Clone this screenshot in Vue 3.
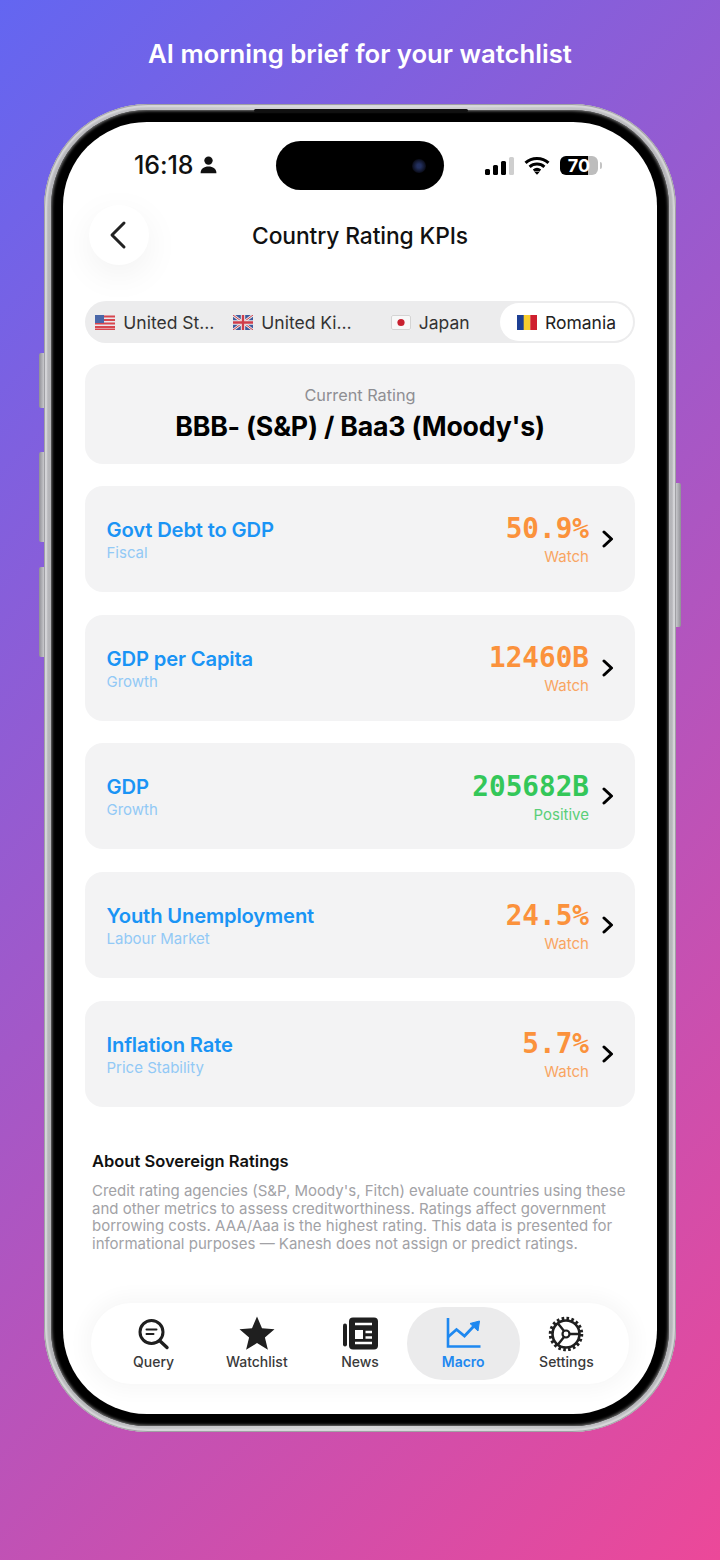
<script setup>
const tabs = [
  { name: 'United St…', flag: 'us' },
  { name: 'United Ki…', flag: 'uk' },
  { name: 'Japan', flag: 'jp' },
  { name: 'Romania', flag: 'ro', active: true },
]
const kpis = [
  { title: 'Govt Debt to GDP', sub: 'Fiscal', value: '50.9%', status: 'Watch', tone: 'watch' },
  { title: 'GDP per Capita', sub: 'Growth', value: '12460B', status: 'Watch', tone: 'watch' },
  { title: 'GDP', sub: 'Growth', value: '205682B', status: 'Positive', tone: 'good' },
  { title: 'Youth Unemployment', sub: 'Labour Market', value: '24.5%', status: 'Watch', tone: 'watch' },
  { title: 'Inflation Rate', sub: 'Price Stability', value: '5.7%', status: 'Watch', tone: 'watch' },
]
const nav = [
  { name: 'Query', icon: 'query' },
  { name: 'Watchlist', icon: 'star' },
  { name: 'News', icon: 'news' },
  { name: 'Macro', icon: 'macro', active: true },
  { name: 'Settings', icon: 'gear' },
]
</script>

<template>
  <div class="page">
    <h1 class="headline">AI morning brief for your watchlist</h1>
    <div class="phone">
      <i class="btn b1"></i><i class="btn b2"></i><i class="btn b3"></i><i class="btn b4"></i>
      <div class="bezel">
        <i class="lip"></i>
        <div class="screen">
          <div class="status">
            <div class="status-left">
              <span class="time">16:18</span>
              <svg width="17" height="18" viewBox="0 0 17 18"><circle cx="8.5" cy="4.6" r="4.2" fill="#111"/><path d="M.6 17.2c0-4.4 3.4-6.6 7.9-6.6s7.9 2.2 7.9 6.6z" fill="#111"/></svg>
            </div>
            <div class="island"><i class="lens"></i></div>
            <div class="status-right">
              <div class="signal"><i class="s1"></i><i class="s2"></i><i class="s3"></i><i class="s4"></i></div>
              <svg class="wifi" width="26" height="19" viewBox="0 0 26 19"><path d="M1.5 6.8C7.8.9 18.200.9 24.500 6.800M5.600 10.800c4.200-3.700 10.600-3.700 14.800 0M9.700 14.600c2-1.500 4.600-1.500 6.600 0" fill="none" stroke="#000" stroke-width="3"/><path d="M10.600 16.200 13 18.800l2.400-2.600c-1.400-1-3.400-1-4.800 0z" fill="#000"/></svg>
              <div class="battery"><span>70</span></div>
              <i class="tip"></i>
            </div>
          </div>

          <div class="header">
            <button class="back" aria-label="Back">
              <svg width="22" height="30" viewBox="0 0 22 30"><path d="M17 3 5 15l12 12" fill="none" stroke="#222" stroke-width="3" stroke-linecap="round" stroke-linejoin="round"/></svg>
            </button>
            <h2 class="title">Country Rating KPIs</h2>
          </div>

          <div class="content">
            <div class="tabs">
              <div v-for="t in tabs" :key="t.flag" class="tab" :class="{ active: t.active }">
                <svg class="flag" width="20" height="15" viewBox="0 0 20 15">
                  <template v-if="t.flag === 'us'">
                    <rect width="20" height="15" rx="1.500" fill="#e8e8ee"/>
                    <path d="M0 1.500h20M0 5h20M0 8.500h20M0 12h20M0 14.500h20" stroke="#d8464e" stroke-width="1.800"/>
                    <rect width="9" height="8" fill="#4a67a8"/>
                  </template>
                  <template v-else-if="t.flag === 'uk'">
                    <rect width="20" height="15" rx="1.500" fill="#3e5a9c"/>
                    <path d="M0 0l20 15M20 0 0 15" stroke="#eee" stroke-width="2.600"/>
                    <path d="M0 0l20 15M20 0 0 15" stroke="#cf3d4a" stroke-width="1"/>
                    <path d="M10 0v15M0 7.500h20" stroke="#eee" stroke-width="4.400"/>
                    <path d="M10 0v15M0 7.500h20" stroke="#cf3d4a" stroke-width="2.400"/>
                  </template>
                  <template v-else-if="t.flag === 'jp'">
                    <rect width="20" height="15" rx="1.500" fill="#f8f8f8"/>
                    <rect x=".5" y=".5" width="19" height="14" rx="1.500" fill="none" stroke="#d4d4d4"/>
                    <circle cx="10" cy="7.500" r="3.600" fill="#c8202f"/>
                  </template>
                  <template v-else>
                    <rect width="7" height="15" fill="#1d3f94"/>
                    <rect x="6.700" width="6.700" height="15" fill="#f7cd2e"/>
                    <rect x="13.300" width="6.700" height="15" fill="#cf1f2f"/>
                  </template>
                </svg>
                <span>{{ t.name }}</span>
              </div>
            </div>

            <div class="rating">
              <div class="rating-label">Current Rating</div>
              <div class="rating-value">BBB- (S&amp;P) / Baa3 (Moody's)</div>
            </div>

            <div class="kpis">
              <div v-for="k in kpis" :key="k.title" class="kpi">
                <div class="kpi-left">
                  <div class="kpi-title">{{ k.title }}</div>
                  <div class="kpi-sub">{{ k.sub }}</div>
                </div>
                <div class="kpi-right" :class="k.tone">
                  <div class="kpi-value">{{ k.value }}</div>
                  <div class="kpi-status">{{ k.status }}</div>
                </div>
                <svg class="chev" width="14" height="18" viewBox="0 0 14 18"><path d="M3 2l7.500 7L3 16" fill="none" stroke="#000" stroke-width="3" stroke-linecap="round" stroke-linejoin="round"/></svg>
              </div>
            </div>

            <div class="about">
              <h3>About Sovereign Ratings</h3>
              <p>Credit rating agencies (S&amp;P, Moody's, Fitch) evaluate countries using these and other metrics to assess creditworthiness. Ratings affect government borrowing costs. AAA/Aaa is the highest rating. This data is presented for informational purposes — Kanesh does not assign or predict ratings.</p>
            </div>
          </div>

          <nav class="nav">
            <div v-for="n in nav" :key="n.name" class="nav-item" :class="{ active: n.active }">
              <svg class="nav-icon" width="38" height="38" viewBox="0 0 38 38">
                <g v-if="n.icon === 'query'" fill="none" stroke="#1f1f1f" stroke-linecap="round">
                  <circle cx="16.500" cy="17" r="11.500" stroke-width="3"/>
                  <path d="M25 26l7 6.500" stroke-width="3.400"/>
                  <path d="M11.500 14.500h10M11.500 19h7" stroke-width="2"/>
                </g>
                <path v-else-if="n.icon === 'star'" d="M19 1.500l5 11.700 12.500 1-9.600 8.200 3 12.300L19 28.100 8.100 34.700l3-12.300-9.600-8.200 12.500-1z" fill="#1f1f1f"/>
                <g v-else-if="n.icon === 'news'">
                  <path d="M4 10.500v19" stroke="#1f1f1f" stroke-width="4" stroke-linecap="round"/>
                  <rect x="8" y="2.500" width="29" height="32" rx="4" fill="#1f1f1f"/>
                  <path d="M14 9h17M24.500 17h6.500M24.500 22.500h6.500M14 28h17" stroke="#fff" stroke-width="2.400"/>
                  <rect x="14" y="15" width="8" height="9" fill="#fff"/>
                </g>
                <g v-else-if="n.icon === 'macro'" fill="none" stroke="#1e88f0">
                  <path d="M4 3v28.500h32.500" stroke-width="2.600"/>
                  <path d="M4 22l8.500-7.500 8 6.500 9-9.500" stroke-width="2.800"/>
                  <path d="M26 8.500l9.500-2.500-1.500 10z" fill="#1e88f0" stroke-width="1"/>
                </g>
                <g v-else fill="none" stroke="#1f1f1f">
                  <circle cx="19" cy="19" r="15.500" stroke-width="3.500" stroke-dasharray="2.600 2.270"/>
                  <circle cx="19" cy="19" r="13.500" stroke-width="2.600"/>
                  <circle cx="19" cy="19" r="3.500" stroke-width="2.200"/>
                  <path d="M22.500 19H32M17 16 11 8.500M17 22 11 29.500" stroke-width="2.400"/>
                </g>
              </svg>
              <span>{{ n.name }}</span>
            </div>
          </nav>
        </div>
      </div>
    </div>
  </div>
</template>

<style>
html, body { margin: 0; padding: 0; }
</style>

<style scoped>
* { box-sizing: border-box; }
.page {
  width: 720px;
  height: 1560px;
  overflow: hidden;
  background: linear-gradient(135deg, #6366f1, #ec4899);
  font-family: Inter, "Noto Sans", sans-serif;
  padding-top: 38px;
}
.headline {
  margin: 0;
  height: 32px;
  line-height: 32px;
  text-align: center;
  color: #fff;
  font-size: 25.700px;
  font-weight: 600;
}
.phone {
  position: relative;
  width: 632px;
  height: 1328px;
  margin: 33.500px 0 0 44px;
  padding: 6px 7px;
  border-radius: 104px;
  background: linear-gradient(90deg, #b4b4b8, #d8d8da 50%, #b4b4b8);
  box-shadow: inset 0 0 1px 1px #9a9a9e, inset 0 0 2px 3px #dedee0;
}
.btn {
  position: absolute;
  width: 5px;
  border-radius: 2px 0 0 2px;
  background: linear-gradient(90deg, #8f8f95, #c8c8cc);
}
.b1 { left: -5px; top: 249px; height: 55px; }
.b2 { left: -5px; top: 348px; height: 90px; }
.b3 { left: -5px; top: 463px; height: 90px; }
.b4 { right: -5px; top: 379px; height: 144px; border-radius: 0 2px 2px 0; background: linear-gradient(90deg, #c8c8cc, #8f8f95); }
.bezel {
  position: relative;
  height: 100%;
  padding: 12px;
  border-radius: 97px;
  background: #000;
  box-shadow: inset 0 0 3px 1px #777;
}
.lip {
  position: absolute;
  top: -1px;
  left: 203px;
  width: 214px;
  height: 3px;
  background: #111;
  border-radius: 2px;
}
.screen {
  position: relative;
  height: 100%;
  background: #fff;
  border-radius: 84px;
  overflow: hidden;
  display: flex;
  flex-direction: column;
}
.status {
  display: grid;
  grid-template-columns: 1fr 168px 1fr;
  padding-top: 19px;
  height: 68px;
  flex: none;
}
.status-left {
  display: flex;
  align-items: center;
  gap: 7px;
  padding-left: 71px;
}
.time { font-size: 25px; font-weight: 500; color: #111; letter-spacing: -0.1px; }
.island {
  position: relative;
  height: 49px;
  border-radius: 25px;
  background: #000;
}
.lens {
  position: absolute;
  left: 136px;
  top: 18px;
  width: 14px;
  height: 14px;
  border-radius: 50%;
  background: radial-gradient(circle, #23305f 20%, #0a0c18 70%);
}
.status-right {
  display: flex;
  align-items: center;
  padding-left: 41px;
}
.signal { display: flex; align-items: flex-end; gap: 3px; height: 18px; margin-top: 1px; }
.signal i { width: 5px; border-radius: 1.500px; background: #000; }
.s1 { height: 6px; }
.s2 { height: 10px; }
.s3 { height: 14px; }
.signal .s4 { height: 18px; background: #cfcfcf; }
.wifi { margin-left: 10px; }
.battery {
  width: 38px;
  height: 19px;
  margin-left: 10px;
  border-radius: 6px;
  background: linear-gradient(90deg, #000 74%, #bdbdbd 74%);
  display: flex;
  align-items: center;
  justify-content: center;
  color: #fff;
  font-size: 18px;
  font-weight: 700;
}
.tip { width: 2px; height: 7px; margin-left: 2px; border-radius: 0 2px 2px 0; background: #c4c4c4; }
.header {
  display: grid;
  grid-template-columns: 86px 1fr 86px;
  align-items: center;
  height: 60px;
  margin-top: 15px;
  flex: none;
}
.back {
  grid-column: 1;
  width: 60px;
  height: 60px;
  margin-left: 26px;
  padding: 0 2px 0 0;
  border: 0;
  border-radius: 50%;
  background: #fff;
  box-shadow: 0 10px 36px rgba(0, 0, 0, 0.06);
  display: flex;
  align-items: center;
  justify-content: center;
}
.title {
  margin: 0;
  padding-top: 2px;
  text-align: center;
  font-size: 22.800px;
  font-weight: 500;
  color: #111;
  letter-spacing: -0.1px;
}
.content { padding: 36px 22px 0; flex: none; }
.tabs {
  height: 42px;
  padding: 2px;
  border-radius: 21px;
  background: #ececed;
  display: grid;
  grid-template-columns: repeat(3, 1fr) 133px;
}
.tab {
  display: flex;
  align-items: center;
  justify-content: center;
  gap: 8px;
  padding: 1px 2px 0 0;
  border-radius: 19px;
  font-size: 17.500px;
  color: #333;
  white-space: nowrap;
}
.tab.active { background: #fff; color: #222; padding-right: 0; }
.flag { flex: none; }
.rating {
  height: 100px;
  margin-top: 21px;
  border-radius: 18px;
  background: #f3f3f4;
  text-align: center;
  padding-top: 21px;
}
.rating-label { font-size: 16.300px; line-height: 20px; color: #8e8e93; }
.rating-value { margin-top: 1px; font-size: 26.700px; line-height: 40px; font-weight: 700; color: #000; letter-spacing: -0.2px; }
.kpis { display: flex; flex-direction: column; gap: 22.800px; margin-top: 22.300px; }
.kpi {
  height: 106px;
  border-radius: 18px;
  background: #f3f3f4;
  padding: 0 20px 0 21.500px;
  display: flex;
  align-items: center;
}
.kpi-left { flex: 1; padding-top: 2px; }
.kpi-title { font-size: 20.200px; line-height: 26px; font-weight: 600; color: #1a94f5; letter-spacing: -0.15px; }
.kpi-sub { font-size: 15px; line-height: 20px; color: #92c9f6; }
.kpi-right { text-align: right; padding-top: 5px; }
.kpi-value {
  font-family: "DejaVu Sans Mono", "Liberation Mono", monospace;
  font-size: 27.700px;
  line-height: 32px;
  font-weight: 700;
}
.kpi-status { font-size: 15px; line-height: 24px; opacity: 0.8; }
.watch { color: #fb923c; }
.good { color: #34c759; }
.chev { margin-left: 12px; flex: none; }
.about { margin-top: 44px; padding: 0 7px; }
.about h3 { margin: 0; font-size: 16.500px; line-height: 20px; font-weight: 600; color: #111; }
.about p {
  margin: 11px 0 0;
  font-size: 15px;
  line-height: 17.700px;
  color: #a2a2a6;
}
.nav {
  margin: auto 28px 30px;
  height: 81px;
  border-radius: 40px;
  background: #fff;
  box-shadow: 0 0 18px 8px rgba(0, 0, 0, 0.03);
  display: grid;
  grid-template-columns: repeat(5, 1fr);
  padding: 4px 11px;
  flex: none;
}
.nav-item {
  border-radius: 36px;
  display: flex;
  flex-direction: column;
  align-items: center;
  justify-content: flex-start;
  padding-top: 8px;
  font-size: 14px;
  font-weight: 500;
  color: #3a3a3a;
  white-space: nowrap;
}
.nav-item span { line-height: 18px; margin-top: 0; }
.nav-icon { display: block; }
.nav-item.active { margin: 0 -5px; background: #ebebec; color: #1e88f0; font-weight: 600; }
</style>
